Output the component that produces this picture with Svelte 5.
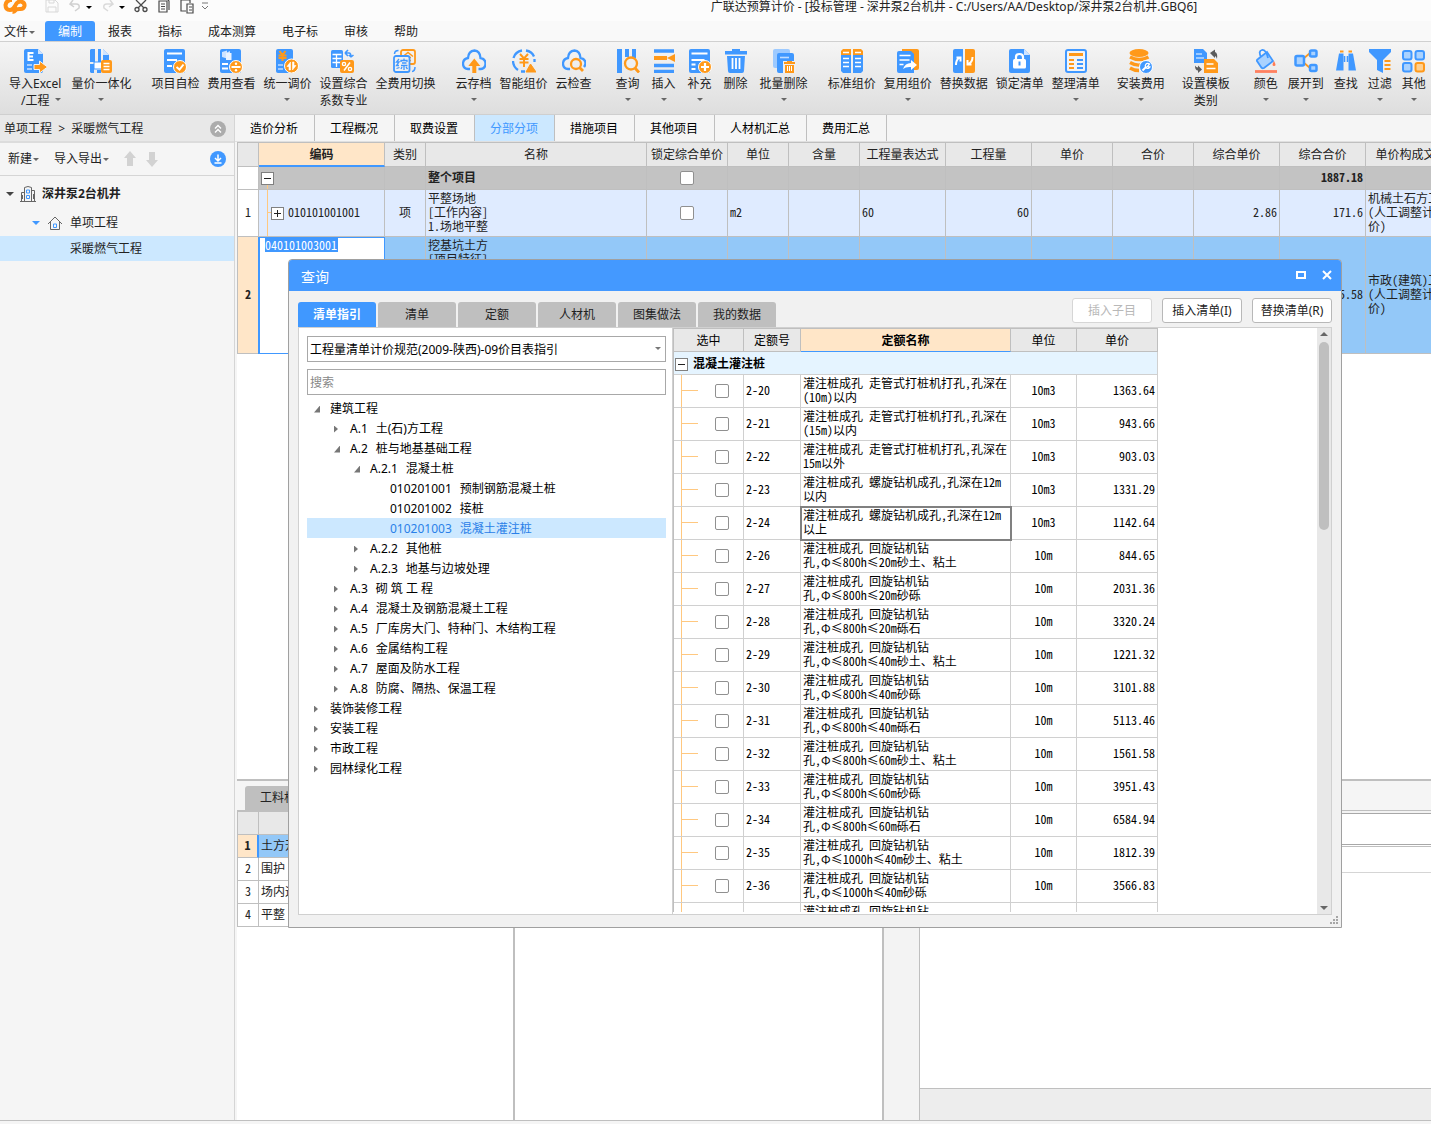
<script lang="ts">
  type Tool = { icon: string; label: string; sub?: string; arrow?: boolean };
  type Node = { level: number; text: string; code?: string; state?: 'open' | 'closed' | 'leaf'; active?: boolean };

  const menus = ['编制', '报表', '指标', '成本测算', '电子标', '审核', '帮助'];

  const ribbon: { space: string; tools: Tool[] }[] = [
    { space: 'first', tools: [
      { icon: 'import', label: '导入Excel', sub: '/工程', arrow: true },
      { icon: 'merge', label: '量价一体化', arrow: true },
    ] },
    { space: 'normal', tools: [
      { icon: 'selfcheck', label: '项目自检' },
      { icon: 'fee', label: '费用查看' },
      { icon: 'adjust', label: '统一调价', arrow: true },
      { icon: 'ratio', label: '设置综合', sub: '系数专业' },
      { icon: 'swapfee', label: '全费用切换' },
    ] },
    { space: 'normal', tools: [
      { icon: 'cloudup', label: '云存档', arrow: true },
      { icon: 'smart', label: '智能组价' },
      { icon: 'cloudcheck', label: '云检查' },
    ] },
    { space: 'wide loose', tools: [
      { icon: 'query', label: '查询', arrow: true },
      { icon: 'insert', label: '插入', arrow: true },
      { icon: 'append', label: '补充', arrow: true },
      { icon: 'trash', label: '删除' },
      { icon: 'batch', label: '批量删除', arrow: true },
    ] },
    { space: 'normal', tools: [
      { icon: 'standard', label: '标准组价' },
      { icon: 'reuse', label: '复用组价', arrow: true },
      { icon: 'replace', label: '替换数据' },
      { icon: 'lock', label: '锁定清单' },
      { icon: 'arrange', label: '整理清单', arrow: true },
    ] },
    { space: 'narrow', tools: [{ icon: 'install', label: '安装费用', arrow: true }] },
    { space: 'narrow', tools: [{ icon: 'template', label: '设置模板', sub: '类别' }] },
    { space: 'wide medium', tools: [
      { icon: 'color', label: '颜色', arrow: true },
      { icon: 'expand', label: '展开到', arrow: true },
      { icon: 'find', label: '查找' },
      { icon: 'filter', label: '过滤', arrow: true },
      { icon: 'more', label: '其他', arrow: true },
    ] },
  ];

  const B = '#4098ff';
  const O = '#ff991a';
  const icons: Record<string, string> = {
    import: `<path d="M3 0h12l5 5v17q0 2-2 2H3q-2 0-2-2V2q0-2 2-2z" fill="${B}"/><path d="M15 0l5 5h-5z" fill="#cfe4ff"/><path d="M4.500 3h6v2h-4v1.500h3.500v2h-3.500V10h4v2h-6z" fill="#fff"/><path d="M4 16h5M4 20h5" stroke="#a8cfff" stroke-width="2"/><path d="M11 15.500h5.500V12l8 6-8 6v-3.500H11z" fill="${O}" stroke="#f3f3f3"/>`,
    merge: `<path d="M2 0h4v13H1V1zM9 0h3v13H9zM14 0l6 6v5h-6zM1 15h4v9H2l-1-1zM8 21h4v3H8z" fill="${B}"/><path d="M14 0l6 6h-6z" fill="#cfe4ff"/><path d="M5 13h8v7H5z" fill="#fff" stroke="${B}"/><rect x="12" y="11" width="11" height="13" rx="2" fill="${O}"/><path d="M14.500 14.500h6M14.500 17.500h6M14.500 20.500h6" stroke="#fff" stroke-width="1.500"/>`,
    selfcheck: `<rect x="1" width="21" height="24" rx="2" fill="${B}"/><path d="M4 4.500h15M4 11h10M4 17h5" stroke="#fff" stroke-width="2"/><circle cx="17" cy="18" r="6.500" fill="${O}" stroke="#fff"/><path d="M13.500 18l3 2.500 4-5" stroke="#fff" stroke-width="2" fill="none"/>`,
    fee: `<rect x="1" width="21" height="24" rx="2" fill="${B}"/><path d="M3 3l5-1.500v8L3 8zM7 4l4-2v9H7z" fill="#cfe4ff"/><path d="M7 4h5.500v7H7z" fill="#eaf3ff"/><path d="M3 15h6M3 19.500h6" stroke="#fff" stroke-width="2"/><circle cx="17" cy="18" r="6.500" fill="${O}" stroke="#fff"/><path d="M12.500 18h9" stroke="#fff" stroke-width="2"/><circle cx="17" cy="14.800" r="1.200" fill="#fff"/><circle cx="17" cy="21.200" r="1.200" fill="#fff"/>`,
    adjust: `<rect x="1" width="17" height="24" rx="2" fill="${B}"/><path d="M4.500 2l3 4 3-4M3.500 6.500h8M3.500 9h8M7.500 6v6" stroke="${O}" stroke-width="2" fill="none"/><path d="M3 16h5M3 20h5" stroke="#9fcaff" stroke-width="2"/><circle cx="16.500" cy="17" r="7" fill="${O}" stroke="#fff"/><path d="M15.500 13v8h-1.500v-3.500h-2zM17.500 21v-8h1.500v3.500h2z" fill="#fff" stroke="#fff" stroke-width=".6"/>`,
    ratio: `<rect y="1" width="12" height="18" rx="1.500" fill="${B}"/><path d="M1.500 5.500h9M1.500 9.500h9M1.500 13.500h9M5.500 5v13" stroke="#fff" stroke-width="1.300"/><path d="M14 4h4q2 0 2 4M14 4l3-3M14 4l3 3M20 8l-2-2M20 8l2.500-2" stroke="${B}" stroke-width="1.600" fill="none"/><rect x="9" y="11" width="14" height="13" rx="2" fill="${O}"/><path d="M13 21.500l6-8" stroke="#fff" stroke-width="1.600"/><circle cx="13" cy="15" r="1.600" fill="none" stroke="#fff" stroke-width="1.400"/><circle cx="19" cy="20" r="1.600" fill="none" stroke="#fff" stroke-width="1.400"/>`,
    swapfee: `<rect x="8" y="1" width="14" height="14" rx="2" fill="none" stroke="${O}" stroke-width="1.800"/><path d="M10 7.500l5-4 5 4M12 8.500h6M13 11.500h5" stroke="${O}" stroke-width="1.500" fill="none"/><rect x="1" y="7" width="15.500" height="16" rx="2" fill="#f0f0f0" stroke="${B}" stroke-width="1.800"/><path d="M6 10l-2.500 3H6l-2.500 3.500H6M3.500 19.500L6.500 18.500M11 9.500v1.500M8 13v-1.500h6V13M9 14h4.500M8 16.500h6.500M11 17v4M9 18l-1 2M13 18l1.500 2" stroke="${B}" stroke-width="1.300" fill="none"/><path d="M1.500 5q0-3.500 4-3.500M22 18q0 4-3 4.500" stroke="${B}" stroke-width="1.500" fill="none"/>`,
    cloudup: `<path d="M8 20H6q-5-.5-5-5.500Q1.200 10 6 9q.5-7 6.500-7.500Q18 2 18.500 9q5 1 5 5.500 0 5-5 5.500h-2" fill="none" stroke="${B}" stroke-width="2.300"/><path d="M12.300 9.500l6 7.500h-4v7h-4v-7h-4z" fill="${O}"/>`,
    smart: `<path d="M10 1.500A10.500 10.500 0 0 0 1.500 9M1 12a11 11 0 0 0 5 9M9 22.500h4M14 1.500q6 1 8 6M22.500 10v3" fill="none" stroke="${B}" stroke-width="2.300"/><path d="M8 5l4 4.500L16 5M7.500 10h9M7.500 13.500h9M12 9v9" stroke="${O}" stroke-width="2" fill="none"/><path d="M18.500 15l5.500 8H14z" fill="${O}" stroke="${O}" stroke-linejoin="round"/>`,
    cloudcheck: `<path d="M8 20H6q-5-.5-5-5.500Q1.200 10 6 9q.5-7 6.500-7.500Q18 2 18.500 9q5 1 5 5.500-.3 2-1.500 3.500" fill="none" stroke="${B}" stroke-width="2.300"/><circle cx="14" cy="15" r="5" fill="none" stroke="${O}" stroke-width="2.300"/><path d="M17.500 18.500L21 22" stroke="${O}" stroke-width="2.800"/>`,
    query: `<path d="M1 0h5v24H1zM9 0h4v8H9zM16 0h4v9h-4z" fill="${B}"/><circle cx="15" cy="14.500" r="6" fill="#efefef" stroke="${O}" stroke-width="2.300"/><path d="M19 19l4 4.500" stroke="${O}" stroke-width="2.800"/>`,
    insert: `<path d="M2 2h20M2 16.500h20M2 22.500h20" stroke="${B}" stroke-width="3.400"/><path d="M2 9h13" stroke="${O}" stroke-width="4"/><path d="M15 9l8-4v8z" fill="${O}"/>`,
    append: `<rect x="1" width="21" height="24" rx="2" fill="${B}"/><path d="M3.500 4.500h16M3.500 11h13M3.500 15.500h4M3.500 20h4" stroke="#fff" stroke-width="1.800"/><circle cx="17" cy="18" r="6.500" fill="${O}" stroke="#fff"/><path d="M13 18h8M17 14v8" stroke="#fff" stroke-width="2.200"/>`,
    trash: `<path d="M8 0h8v2h7v3.500H1V2h7zM3 7h18l-1 15q0 2-2 2H6q-2 0-2-2z" fill="${B}"/><path d="M8.500 9v11M12 9v11M15.500 9v11" stroke="#fff" stroke-width="1.800"/>`,
    batch: `<rect x="1" width="17" height="19" rx="2" fill="#9dcaff"/><rect x="5" y="4" width="17" height="20" rx="2" fill="${B}"/><path d="M8 8.500h9" stroke="#bfdcff" stroke-width="1.600"/><path d="M11 12h13v13H11z" fill="#efefef"/><path d="M12 14h11M15 13h5" stroke="${O}" stroke-width="2"/><path d="M13 16h9v8h-9z" fill="${O}"/><path d="M15.500 17v5M17.500 17v5M19.500 17v5" stroke="#fff" stroke-width="1"/>`,
    standard: `<path d="M3 0h8v6H1V2zM13 0h8l2 2v4H13z" fill="${O}"/><path d="M1 6h10v18H3l-2-2zM13 6h10v16l-2 2h-8z" fill="${B}"/><path d="M3 3.500h6M3 9.500h6M3 13.500h6M3 17.500h6M15 3.500h6M15 9.500h6M15 13.500h6M15 17.500h6" stroke="#fff" stroke-width="1.600"/>`,
    reuse: `<path d="M6 0h15q2 0 2 2v17q0 2-2 2H6z" fill="${O}"/><path d="M3 2h12l3 3v19H3q-2 0-2-2V4q0-2 2-2z" fill="${B}"/><path d="M3.500 6.500h11M3.500 11h10M3.500 15.500h4" stroke="#fff" stroke-width="1.600"/><path d="M7 20q2-6 8-6v-3l6 5-6 5v-3q-5-.5-8 2z" fill="#fff"/>`,
    replace: `<path d="M3 0h8v24H3q-2 0-2-2V2q0-2 2-2z" fill="${B}"/><path d="M13 0h8q2 0 2 2v20q0 2-2 2h-8z" fill="${O}"/><path d="M4 16q0-5 3-7M4.500 8.500h4v4M20.500 8q0 5-4 7M15.500 11v4.500h4" stroke="#fff" stroke-width="2" fill="none"/>`,
    lock: `<path d="M3 0h13l6 6v16q0 2-2 2H3q-2 0-2-2V2q0-2 2-2z" fill="${B}"/><path d="M16 0l6 6h-6z" fill="#cfe4ff"/><path d="M8 11V8q0-3 3.500-3T15 8v3" fill="none" stroke="#fff" stroke-width="2.200"/><rect x="5" y="10" width="13" height="9.500" rx="1.500" fill="#fff"/><path d="M11.500 12.500v4" stroke="${B}" stroke-width="2"/>`,
    arrange: `<rect x="2" y="1" width="20" height="22" rx="2" fill="#f4f4f4" stroke="${B}" stroke-width="2"/><path d="M5 5.500h14" stroke="${O}" stroke-width="3"/><path d="M5 11h5M5 15h5M5 19h5" stroke="${O}" stroke-width="2"/><path d="M13 11h6M13 15h6M13 19h6" stroke="${B}" stroke-width="2"/>`,
    install: `<ellipse cx="10" cy="4" rx="9.500" ry="4" fill="${O}"/><path d="M1 8q9 5 18.500 0M1 13.500q5 3 10 2.500M1 19q4 2.500 9 2.500" stroke="${O}" stroke-width="3.300" fill="none"/><circle cx="17" cy="18" r="6.500" fill="${B}" stroke="#fff"/><path d="M13.500 21.500l4-4" stroke="#fff" stroke-width="2"/><path d="M20.500 15a2.500 2.500 0 1 0 .5 3l-2.500-.5z" fill="none" stroke="#fff" stroke-width="1.300"/>`,
    template: `<path d="M0 0h9l4 4v10H0z" fill="${B}"/><path d="M2 5h6M2 9h8" stroke="#bcdaff" stroke-width="1.500"/><path d="M10 10h10l4 4v10H10z" fill="${O}"/><path d="M12.500 15h7M12.500 19.500h9" stroke="#fff" stroke-width="1.600"/><path d="M16 4l5-3.500v2.500q3 1 2 7-1-3-2-3v2zM8 20.500L4 24v-2.500q-3 0-3-5 1 2 3 2v-2z" fill="#5c5c5c"/>`,
    color: `<path d="M4 10l9-7 6 9-9 7q-2 1-3-1l-4-6q-.5-1 1-2z" fill="#a9d2ff" stroke="${B}" stroke-width="1.800"/><path d="M7 8Q4 2 8 1q4-.5 6 8" fill="none" stroke="${B}" stroke-width="1.800"/><path d="M20 12q3 5 0 5t0-5z" fill="#ff7c55"/><path d="M1 22.500h22" stroke="#ff8160" stroke-width="2.800"/>`,
    expand: `<path d="M9 10l7-6M9 13l7 6" stroke="${O}" stroke-width="1.800"/><rect x="1.500" y="7" width="8.500" height="9.500" rx="1.500" fill="#a9d2ff" stroke="${B}" stroke-width="2.500"/><rect x="16" y="1.500" width="6.500" height="6" rx="1.500" fill="#a9d2ff" stroke="${B}" stroke-width="2.500"/><rect x="16" y="16" width="6.500" height="6" rx="1.500" fill="#a9d2ff" stroke="${B}" stroke-width="2.500"/>`,
    find: `<path d="M5 4.500h4.500v17H2zM14.500 4.500H19l3 17h-7.500z" fill="${B}"/><path d="M10.500 7v6M13.500 7v6" stroke="${B}" stroke-width="1.600"/><path d="M6 2.500h3.500M14.500 2.500H18" stroke="${O}" stroke-width="2.200"/>`,
    filter: `<path d="M1 0h22v3l-8 8v13l-6-3V11L1 3z" fill="${B}"/><path d="M16.500 12h6M16.500 16h6M16.500 20h6" stroke="${O}" stroke-width="2"/>`,
    more: `<g stroke-width="2" stroke="${B}" fill="#a9d2ff"><rect x="1" y="2" width="8.500" height="8.500" rx="2"/><rect x="13.500" y="2" width="8.500" height="8.500" rx="2"/><rect x="1" y="14" width="8.500" height="8.500" rx="2"/></g><rect x="13.500" y="14" width="8.500" height="8.500" rx="2" fill="#ffd090" stroke="${O}" stroke-width="2"/>`,
  };

  const pageTabs = ['造价分析', '工程概况', '取费设置', '分部分项', '措施项目', '其他项目', '人材机汇总', '费用汇总'];
  const columns = ['', '编码', '类别', '名称', '锁定综合单价', '单位', '含量', '工程量表达式', '工程量', '单价', '合价', '综合单价', '综合合价', '单价构成文件'];
  const works = ['土方开挖', '围护', '场内运输', '平整'];

  const queryTabs = ['清单指引', '清单', '定额', '人材机', '图集做法', '我的数据'];
  const tree: Node[] = [
    { level: 0, text: '建筑工程', state: 'open' },
    { level: 1, code: 'A.1', text: '土(石)方工程' },
    { level: 1, code: 'A.2', text: '桩与地基基础工程', state: 'open' },
    { level: 2, code: 'A.2.1', text: '混凝土桩', state: 'open' },
    { level: 3, code: '010201001', text: '预制钢筋混凝土桩', state: 'leaf' },
    { level: 3, code: '010201002', text: '接桩', state: 'leaf' },
    { level: 3, code: '010201003', text: '混凝土灌注桩', state: 'leaf', active: true },
    { level: 2, code: 'A.2.2', text: '其他桩' },
    { level: 2, code: 'A.2.3', text: '地基与边坡处理' },
    { level: 1, code: 'A.3', text: '砌 筑 工 程' },
    { level: 1, code: 'A.4', text: '混凝土及钢筋混凝土工程' },
    { level: 1, code: 'A.5', text: '厂库房大门、特种门、木结构工程' },
    { level: 1, code: 'A.6', text: '金属结构工程' },
    { level: 1, code: 'A.7', text: '屋面及防水工程' },
    { level: 1, code: 'A.8', text: '防腐、隔热、保温工程' },
    { level: 0, text: '装饰装修工程' },
    { level: 0, text: '安装工程' },
    { level: 0, text: '市政工程' },
    { level: 0, text: '园林绿化工程' },
  ];

  const tube = '灌注桩成孔 走管式打桩机打孔,孔深在\n';
  const screw = '灌注桩成孔 螺旋钻机成孔,孔深在12m\n';
  const rotary = '灌注桩成孔 回旋钻机钻\n孔,Φ≤';
  const quotas = [
    ['2-20', tube + '(10m)以内', '10m3', '1363.64'],
    ['2-21', tube + '(15m)以内', '10m3', '943.66'],
    ['2-22', tube + '15m以外', '10m3', '903.03'],
    ['2-23', screw + '以内', '10m3', '1331.29'],
    ['2-24', screw + '以上', '10m3', '1142.64'],
    ['2-26', rotary + '800h≤20m砂土、粘土', '10m', '844.65'],
    ['2-27', rotary + '800h≤20m砂砾', '10m', '2031.36'],
    ['2-28', rotary + '800h≤20m砾石', '10m', '3320.24'],
    ['2-29', rotary + '800h≤40m砂土、粘土', '10m', '1221.32'],
    ['2-30', rotary + '800h≤40m砂砾', '10m', '3101.88'],
    ['2-31', rotary + '800h≤40m砾石', '10m', '5113.46'],
    ['2-32', rotary + '800h≤60m砂土、粘土', '10m', '1561.58'],
    ['2-33', rotary + '800h≤60m砂砾', '10m', '3951.43'],
    ['2-34', rotary + '800h≤60m砾石', '10m', '6584.94'],
    ['2-35', rotary + '1000h≤40m砂土、粘土', '10m', '1812.39'],
    ['2-36', rotary + '1000h≤40m砂砾', '10m', '3566.83'],
    ['', rotary, '', ''],
  ];
  let current = $state('2-24');
  let code = $state('040101003001');
</script>

<svelte:head><title>广联达预算计价</title></svelte:head>

<div class="app">
  <header class="titlebar">
    <div class="quick">
      <svg class="logo" width="24" height="16" viewBox="0 0 24 16" fill="none" stroke="#ff9118" stroke-width="4"><path d="M9 0H7Q3 1 2.500 5 2.500 10 7 10q3 0 5-4 2-5 6-4.500 4 1 3.500 4.500-1 3.500-5 3-4 0-4 1.500-1 1.500-3 1.500" /></svg>
      <button aria-label="保存"><svg width="14" height="14" viewBox="0 0 14 14" fill="none" stroke="#d8d8d8"><path d="M1 0h9l3 3v9H1zM4 0v3h5V0M3 12V7h8v5" /></svg></button>
      <button aria-label="撤销" class="drop"><svg width="14" height="14" viewBox="0 0 14 14" fill="none" stroke="#d0d0d0" stroke-width="1.500"><path d="M5 0L2 4l4 3M2 4h6q4 0 3 4l-4 3" /></svg><i class="caret dark"></i></button>
      <button aria-label="恢复" class="drop"><svg width="14" height="14" viewBox="0 0 14 14" fill="none" stroke="#dadada" stroke-width="1.500"><path d="M9 0l3 4-4 3M12 4H6Q2 4 3 8l4 3" /></svg><i class="caret dark"></i></button>
      <button aria-label="剪切"><svg width="14" height="14" viewBox="0 0 14 14" fill="none" stroke="#4a4a4a" stroke-width="1.300"><path d="M2 0l8 8M12 0L4 8" /><circle cx="3" cy="9.500" r="2" /><circle cx="11" cy="9.500" r="2" /></svg></button>
      <button aria-label="复制"><svg width="14" height="14" viewBox="0 0 14 14" fill="none" stroke="#4a4a4a" stroke-width="1.200"><path d="M2 1h8v11H2zM4 4h4M4 6.500h4M4 9h4M11 0l1 1v9" /></svg></button>
      <button aria-label="粘贴"><svg width="14" height="14" viewBox="0 0 14 14" fill="none" stroke="#4a4a4a" stroke-width="1.200"><path d="M6 11H1V0h9v3M7 4h6v9H7zM9 7h3M9 10h3" /></svg></button>
      <button aria-label="自定义" class="custom"><svg width="8" height="10" viewBox="0 0 8 10" fill="none" stroke="#777"><path d="M1 3h6M1 6l3 3 3-3" /></svg></button>
    </div>
    <h1>广联达预算计价 - [投标管理 - 深井泵2台机井 - C:/Users/AA/Desktop/深井泵2台机井.GBQ6]</h1>
  </header>

  <nav class="menubar">
    <button class="file">文件<i class="caret"></i></button>
    {#each menus as menu, i}
      <button class:active={i === 0}>{menu}</button>
    {/each}
  </nav>

  <div class="ribbon">
    {#each ribbon as group}
      <div class="group {group.space}">
        {#each group.tools as tool}
          <button class="tool">
            <svg width="24" height="24" viewBox="0 0 24 24" aria-hidden="true">{@html icons[tool.icon]}</svg>
            <span>{tool.label}</span>
            {#if tool.sub}
              <span class="sub">{tool.sub}{#if tool.arrow}<i class="caret side"></i>{/if}</span>
            {:else if tool.arrow}
              <i class="caret"></i>
            {/if}
          </button>
        {/each}
      </div>
    {/each}
  </div>

  <div class="workspace">
    <aside class="sidebar">
      <div class="crumbs">
        <span>单项工程 &nbsp;&gt;&nbsp; 采暖燃气工程</span>
        <button aria-label="收起"><svg width="16" height="16" viewBox="0 0 16 16"><circle cx="8" cy="8" r="8" fill="#acacac" /><path d="M5 7.500l3-3 3 3M5 11.500l3-3 3 3" fill="none" stroke="#fff" stroke-width="1.400" /></svg></button>
      </div>
      <div class="sidetools">
        <button>新建<i class="caret"></i></button>
        <button>导入导出<i class="caret"></i></button>
        <button aria-label="上移"><svg width="12" height="16" viewBox="0 0 12 16"><path d="M6 0l6 7H9v8H3V7H0z" fill="#d2d2d2" /></svg></button>
        <button aria-label="下移"><svg width="12" height="16" viewBox="0 0 12 16"><path d="M6 16l6-7H9V1H3v8H0z" fill="#d2d2d2" /></svg></button>
        <button aria-label="下载" class="last"><svg width="16" height="16" viewBox="0 0 16 16"><circle cx="8" cy="8" r="8" fill="#4098ff" /><path d="M8 3.500v6M5 7l3 3 3-3M4.500 12h7" fill="none" stroke="#fff" stroke-width="1.500" /></svg></button>
      </div>
      <ul class="projects">
        <li class="root">
          <i class="caret big"></i>
          <svg width="16" height="16" viewBox="0 0 16 16" fill="none" stroke="#666"><path d="M0 15.500h16M1.500 15V6.500H4M4.500 15V1.500L8 .5l3.500 1V15M12 4.500h2.500V15M2.500 9v4M13.500 8v5" /><path d="M6.500 4h3v3h-3zM6.500 9.500h3v3h-3z" stroke="#4098ff" /></svg>
          深井泵2台机井
        </li>
        <li class="unit">
          <i class="caret big blue"></i>
          <svg width="14" height="14" viewBox="0 0 14 14" fill="none" stroke="#666"><path d="M0 8l7-7 7 7M2.500 6v7.500h9V6" /><path d="M5.500 8h3v3.500h-3z" stroke="#4098ff" /></svg>
          单项工程
        </li>
        <li class="leaf">采暖燃气工程</li>
      </ul>
    </aside>

    <main>
      <nav class="pagetabs">
        {#each pageTabs as tab, i}
          <button class:active={i === 3}>{tab}</button>
        {/each}
      </nav>

      <section class="bill">
        <table class="grid">
          <colgroup>
            <col class="c-no" /><col class="c-code" /><col class="c-kind" /><col class="c-name" /><col class="c-lock" /><col class="c-unit" /><col class="c-amount" />
            <col class="c-calc" /><col class="c-calc" /><col class="c-lock" /><col class="c-lock" /><col class="c-calc" /><col class="c-calc" /><col class="c-file" />
          </colgroup>
          <thead>
            <tr>{#each columns as column, i}<th class:hot={i === 1}>{column}</th>{/each}</tr>
          </thead>
          <tbody>
            <tr class="total">
              <td class="no"></td>
              <td class="branch start"><button class="toggle" aria-label="折叠"></button></td>
              <td></td>
              <td>整个项目</td>
              <td class="mid"><input type="checkbox" aria-label="锁定全部" /></td>
              <td></td><td></td><td></td><td></td><td></td><td></td><td></td>
              <td class="num">1887.18</td>
              <td></td>
            </tr>
            <tr class="first">
              <td class="no">1</td>
              <td class="branch item"><button class="toggle plus" aria-label="展开"></button>010101001001</td>
              <td class="mid">项</td>
              <td class="lines">{'平整场地\n[工作内容]\n1.场地平整'}</td>
              <td class="mid"><input type="checkbox" aria-label="锁定第1行" /></td>
              <td>m2</td>
              <td></td>
              <td>60</td>
              <td class="num">60</td>
              <td></td><td></td>
              <td class="num">2.86</td>
              <td class="num">171.6</td>
              <td class="lines">{'机械土石方工程\n(人工调整计\n价)'}</td>
            </tr>
            <tr class="second">
              <td class="no">2</td>
              <td class="edit"><input type="text" aria-label="编码" bind:value={code} size="12" /></td>
              <td></td>
              <td class="lines top">{'挖基坑土方\n[项目特征]'}</td>
              <td></td><td></td><td></td><td></td><td></td><td></td><td></td><td></td>
              <td class="num">1715.58</td>
              <td class="lines">{'市政(建筑)工程\n(人工调整计\n价)'}</td>
            </tr>
          </tbody>
        </table>
      </section>

      <section class="detail">
        <div class="detailtabs"><button>工料机显示</button></div>
        <div class="panes">
          <div class="pane works">
            <table class="grid">
              <colgroup><col class="c-no" /><col /></colgroup>
              <thead><tr><th></th><th></th></tr></thead>
              <tbody>
                {#each works as work, i}
                  <tr class:picked={i === 0}><td class="no">{i + 1}</td><td>{work}</td></tr>
                {/each}
              </tbody>
            </table>
          </div>
          <div class="pane middle"></div>
          <div class="gutter"></div>
          <div class="pane right">
            <div class="box"></div>
            <div class="head"></div>
            <div class="foot"></div>
          </div>
        </div>
      </section>
    </main>
  </div>
  <footer class="status"></footer>

  <div class="dialog" role="dialog" aria-labelledby="query-title">
    <div class="caption">
      <h2 id="query-title">查询</h2>
      <button aria-label="最大化"><svg width="12" height="12" viewBox="0 0 12 12" fill="none" stroke="#fff" stroke-width="2"><path d="M2 2h8v6H2z" /></svg></button>
      <button aria-label="关闭"><svg width="12" height="12" viewBox="0 0 12 12" stroke="#fff" stroke-width="2"><path d="M2 1l8 8M10 1l-8 8" /></svg></button>
    </div>
    <div class="dialogtop">
      <div class="querytabs">
        {#each queryTabs as tab, i}
          <button class:active={i === 0}>{tab}</button>
        {/each}
      </div>
      <div class="commands">
        <button disabled>插入子目</button>
        <button>插入清单(I)</button>
        <button>替换清单(R)</button>
      </div>
    </div>

    <div class="content">
      <div class="guide">
        <div class="picker">
          <select aria-label="清单规范"><option>工程量清单计价规范(2009-陕西)-09价目表指引</option></select>
        </div>
        <input class="search" type="search" placeholder="搜索" aria-label="搜索" />
        <ul class="tree">
          {#each tree as node}
            <li class="lv{node.level}" class:active={node.active}>
              <i class="mark {node.state ?? 'closed'}"></i>
              {#if node.code}<span class="code">{node.code}</span>{/if}
              <span>{node.text}</span>
            </li>
          {/each}
        </ul>
      </div>

      <div class="quotas">
        <table class="grid">
          <colgroup><col class="q-pick" /><col class="q-no" /><col class="q-name" /><col class="q-unit" /><col class="q-price" /></colgroup>
          <thead><tr><th>选中</th><th>定额号</th><th class="hot">定额名称</th><th>单位</th><th>单价</th></tr></thead>
          <tbody>
            <tr class="cat"><td colspan="5"><button class="toggle" aria-label="折叠"></button>混凝土灌注桩</td></tr>
            {#each quotas as [no, name, unit, price]}
              <tr onclick={() => (current = no)}>
                <td class="pick"><input type="checkbox" aria-label="选中 {no}" /></td>
                <td>{no}</td>
                <td class="lines" class:current={no === current}>{name}</td>
                <td class="mid">{unit}</td>
                <td class="num">{price}</td>
              </tr>
            {/each}
          </tbody>
        </table>
      </div>
      <div class="scroll"><i class="up"></i><div class="thumb"></div><i class="down"></i></div>
    </div>
    <svg class="grip" width="8" height="8" viewBox="0 0 8 8" fill="#a6a6a6"><path d="M6 0h2v2H6zM3 3h2v2H3zM6 3h2v2H6zM0 6h2v2H0zM3 6h2v2H3zM6 6h2v2H6z" /></svg>
  </div>
</div>

<style>
  :global(body) { margin: 0; background: #f5f5f5; }
  .app { position: relative; display: flex; flex-direction: column; height: 100vh; min-height: 1000px; overflow: hidden; background: #f5f5f5; color: #222; font: 12px/16px "Noto Sans", "Noto Sans CJK SC", sans-serif; }
  * { box-sizing: border-box; }
  button { border: 0; padding: 0; background: none; color: inherit; font: inherit; white-space: nowrap; }
  svg { display: block; }
  ul { list-style: none; margin: 0; padding: 0; }
  h1, h2 { margin: 0; font-weight: 400; }
  .caret { display: inline-block; width: 0; height: 0; border: 3px solid transparent; border-top-color: #666; border-bottom: 0; }
  .caret.dark { border-top-color: #000; }
  .caret.big { border-width: 4px 4px 0; border-top-color: #444; }
  .caret.blue { border-top-color: #4098ff; }

  .titlebar { display: grid; grid-template-columns: 1fr 2fr; height: 21px; flex: none; background: #fcfcfc; }
  .titlebar h1 { font-size: 12px; line-height: 14px; text-align: center; white-space: nowrap; }
  .quick { display: flex; align-items: flex-start; gap: 9px; padding-left: 3px; }
  .logo { margin-right: 9px; }
  .quick .drop { display: flex; align-items: center; gap: 4px; }
  .quick .custom { margin-left: -2px; }

  .menubar { display: flex; height: 21px; flex: none; border-bottom: 1px solid #d0d0d0; background: #f9f9f9; }
  .menubar button { padding: 2px 13px 0; line-height: 18px; }
  .menubar .file { display: flex; align-items: center; width: 45px; padding: 2px 0 0 4px; gap: 1px; }
  .menubar .active { border-radius: 3px 3px 0 0; background: #4098ff; color: #fff; }

  .ribbon { display: flex; height: 73px; flex: none; overflow: hidden; border-bottom: 1px solid #cfcfcf; background: linear-gradient(#f5f5f5, #dedede); }
  .group { display: flex; flex: none; gap: 8px; margin-left: 20px; padding-top: 7px; }
  .group.first { gap: 10px; margin-left: 9px; }
  .group.wide { margin-left: 24px; }
  .group.narrow { margin-left: 17px; }
  .group.loose { gap: 12px; }
  .group.medium { gap: 10px; }
  .tool { display: flex; flex-direction: column; align-items: center; line-height: 17px; }
  .tool svg { margin-bottom: 2px; flex: none; }
  .tool > .caret { margin-top: 6px; }
  .sub { position: relative; }
  .side { position: absolute; top: 6px; right: -12px; }

  .workspace { display: flex; flex: 1; min-height: 0; }
  .sidebar { width: 235px; flex: none; border-right: 1px solid #d5d5d5; }
  .crumbs { display: flex; align-items: center; justify-content: space-between; height: 28px; padding: 1px 8px 0 4px; border-bottom: 2px solid #dcdcdc; background: #e8e8e8; }
  .sidetools { display: flex; align-items: center; gap: 10px; height: 33px; padding: 0 8px; border-bottom: 1px solid #d5d5d5; }
  .sidetools button:not([aria-label]) { display: flex; align-items: center; gap: 1px; margin-right: 5px; }
  .sidetools .last { margin-left: auto; }
  .projects { padding-top: 2px; }
  .projects li { display: flex; align-items: center; height: 29px; gap: 6px; padding-top: 2px; }
  .projects .root { padding-left: 6px; font-weight: 700; }
  .projects .unit { padding-left: 32px; gap: 8px; }
  .projects .leaf { height: 25px; padding: 0 0 0 70px; background: #cce8ff; }

  main { display: flex; flex: 1; flex-direction: column; min-width: 0; }
  .pagetabs { display: flex; height: 27px; flex: none; border-bottom: 1px solid #e0e0e0; }
  .pagetabs button { padding: 2px 16px 0 15px; border-right: 1px solid #bfbfbf; color: #000; }
  .pagetabs .active { background: #cce8ff; color: #4098ff; }

  .bill { flex: 1; min-height: 0; margin-left: 2px; overflow: hidden; background: #fff; }
  .grid { width: 100%; table-layout: fixed; border-collapse: separate; border-spacing: 0; border: 0 solid #bfbfbf; border-width: 1px 0 0 1px; font: 12px/14px "Noto Sans Mono CJK SC", "Noto Sans CJK SC", sans-serif; }
  .bill .grid { width: 1201px; }
  .grid th, .grid td { height: 23px; padding: 0 2px 2px; border: 0 solid #bfbfbf; border-width: 0 1px 1px 0; font-weight: 400; text-align: left; white-space: nowrap; overflow: hidden; }
  .grid th { background: #e8e8e8; text-align: center; }
  .bill .grid th { height: 24px; }
  .grid th.hot { padding-bottom: 0; border-bottom: 2px solid #4098ff; background: #ffe6c8; font-weight: 700; }
  .c-no { width: 21px; }
  .c-code { width: 126px; }
  .c-kind { width: 41px; }
  .c-name { width: 221px; }
  .c-lock { width: 81px; }
  .c-unit { width: 61px; }
  .c-amount { width: 71px; }
  .c-calc { width: 86px; }
  .c-file { width: 92px; }
  .grid .no { padding: 0 0 2px; background: #fff; text-align: center; }
  .grid .mid { text-align: center; }
  .grid .num { text-align: right; }
  .grid .lines { white-space: pre; }
  .total td { background: #c3c3c3; font-weight: 700; }
  .first td { height: 47px; background: #dfebff; }
  .second td { height: 117px; background: #93c8f8; }
  .second .no { background: #ffe6c8; font-weight: 700; }
  .grid .top { padding-top: 1px; vertical-align: top; }
  .second .edit { padding: 0 5px; border: 1px solid #4098ff; box-shadow: -1px 0 #4098ff; background: #fff; vertical-align: top; }
  .edit input { display: block; width: 73px; height: 14px; padding: 0; border: 0; background: #4098ff; color: #fff; font: inherit; }
  .grid .branch { position: relative; }
  .branch::before { content: ""; position: absolute; left: 8px; top: 0; bottom: 0; width: 1px; background: #ffc880; }
  .branch.start::before { top: 17px; }
  .grid .item { padding-left: 12px; }
  .item::after { content: ""; position: absolute; left: 8px; top: 22px; width: 4px; height: 1px; background: #ffc880; }
  .toggle { position: relative; display: inline-block; width: 13px; height: 13px; border: 1px solid #808080; background: linear-gradient(#222, #222) center / 7px 1px no-repeat #fff; vertical-align: -2px; }
  .toggle.plus { margin-right: 4px; background: linear-gradient(#222, #222) center / 7px 1px no-repeat, linear-gradient(#222, #222) center / 1px 7px no-repeat #fff; }
  input[type="checkbox"] { display: inline-block; width: 14px; height: 14px; margin: 0; appearance: none; border: 1px solid #909090; border-radius: 2px; background: #fff; vertical-align: middle; }

  .detail { display: flex; flex-direction: column; height: 341px; flex: none; margin-left: 2px; border-top: 2px solid #bfbfbf; }
  .detailtabs { display: flex; align-items: flex-end; height: 30px; flex: none; padding-left: 8px; border-bottom: 1px solid #bfbfbf; }
  .detailtabs button { height: 24px; padding: 0 15px; border-radius: 3px 3px 0 0; background: #bfbfbf; }
  .panes { display: flex; flex: 1; min-height: 0; background: #fff; }
  .works { width: 278px; border-right: 2px solid #bfbfbf; }
  .picked td { background: #93c8f8; }
  .picked .no { border-right: 2px solid #4098ff; background: #ffe6c8; font-weight: 700; }
  .middle { width: 369px; border-right: 2px solid #bfbfbf; }
  .gutter { width: 36px; border-right: 1px solid #bfbfbf; background: #f3f3f3; }
  .right { display: flex; flex: 1; flex-direction: column; }
  .box { height: 32px; margin-top: 2px; border: solid #a8a8a8; border-width: 1px 0; box-shadow: 0 -2px #f3f3f3; }
  .head { height: 27px; margin-top: 1px; border: solid #bfbfbf; border-width: 1px 0; border-bottom-color: #d5d5d5; }
  .foot { height: 32px; margin-top: auto; border-top: 1px solid #bfbfbf; background: #ededed; }
  .status { height: 4px; flex: none; border-top: 1px solid #bfbfbf; background: #f5f5f5; }

  /* query window floats over the bill sheet */
  .dialog { position: absolute; top: 259px; right: 89px; left: 288px; display: flex; flex-direction: column; height: 669px; padding-bottom: 12px; border: 1px solid #a0a0a0; border-radius: 4px 4px 0 0; background: #f1f1f1; overflow: hidden; }
  .caption { display: flex; align-items: center; gap: 14px; height: 31px; flex: none; padding: 0 8px 0 12px; background: #4499ff; color: #fff; }
  .caption h2 { flex: 1; padding-top: 2px; font-size: 14px; line-height: 20px; }
  .dialogtop { display: flex; justify-content: space-between; height: 36px; flex: none; padding: 0 9px; }
  .querytabs { display: flex; align-items: flex-end; gap: 2px; }
  .querytabs button { width: 78px; height: 25px; border-radius: 3px 3px 0 0; background: #bfbfbf; }
  .querytabs .active { background: #4098ff; color: #fff; font-weight: 700; }
  .commands { display: flex; gap: 10px; padding-top: 7px; }
  .commands button { width: 80px; height: 25px; border: 1px solid #b8b8b8; border-radius: 3px; background: #fff; }
  .commands button:disabled { border-color: #d6d6d6; color: #b8b8b8; }
  .content { display: flex; flex: 1; min-height: 0; margin: 0 9px; border: 1px solid #d0d0d0; background: #fff; }
  .guide { width: 374px; flex: none; padding: 8px 6px 0 8px; border-right: 1px solid #d0d0d0; color: #000; }
  .picker { position: relative; }
  .picker::after { content: ""; position: absolute; top: 11px; right: 5px; border: 3px solid transparent; border-top-color: #777; border-bottom: 0; pointer-events: none; }
  select, .search { display: block; width: 100%; height: 26px; padding: 1px 2px 0; appearance: none; border: 1px solid #a8a8a8; border-radius: 0; background: #fff; color: #000; font: inherit; }
  .search { margin-top: 7px; }
  .search::placeholder { color: #888; }
  .tree { margin-top: 3px; }
  .tree li { display: flex; align-items: center; height: 20px; padding: 2px 0 0 7px; white-space: nowrap; }
  .tree .lv1 { padding-left: 27px; }
  .tree .lv2 { padding-left: 47px; }
  .tree .lv3 { padding-left: 67px; }
  .tree .active { background: #cce8ff; color: #2a80e8; }
  .code { margin-right: 8px; }
  .mark { width: 16px; height: 7px; flex: none; }
  .mark.closed { background: #777; clip-path: polygon(0 0, 4px 50%, 0 100%); }
  .mark.open { background: #777; clip-path: polygon(6px 0, 6px 100%, 0 100%); }

  .quotas { flex: 1; min-width: 0; margin-bottom: 2px; overflow: hidden; color: #000; }
  .quotas .grid { width: 485px; }
  .quotas .grid th { padding-bottom: 0; }
  .quotas .grid th.hot { border-bottom-width: 1px; }
  .quotas td { border-color: #d0d0d0; }
  .q-pick { width: 70px; }
  .q-no { width: 57px; }
  .q-name { width: 210px; }
  .q-unit { width: 66px; }
  .q-price { width: 81px; }
  .quotas td:not([colspan]) { height: 33px; }
  .quotas .cat td { padding: 0 0 0 1px; background: #e5f4ff; font-weight: 700; }
  .cat .toggle { margin-right: 5px; }
  .quotas .pick { position: relative; padding-left: 41px; }
  .pick::before { content: ""; position: absolute; top: 0; bottom: 0; left: 7px; width: 1px; background: #ffc880; }
  .pick::after { content: ""; position: absolute; top: 15px; left: 8px; width: 16px; height: 1px; background: #ffc880; }
  .quotas .current { outline: 2px solid #808080; outline-offset: -1px; }
  .scroll { display: flex; flex-direction: column; align-items: center; width: 14px; flex: none; padding: 4px 0; background: #e8e8e8; }
  .up, .down { border: 4px solid transparent; }
  .up { border-top: 0; border-bottom-color: #666; }
  .down { margin-top: auto; border-bottom: 0; border-top-color: #666; }
  .thumb { width: 10px; height: 188px; margin-top: 6px; border-radius: 5px; background: #bfbfbf; }
  .grip { position: absolute; right: 3px; bottom: 3px; }
</style>
